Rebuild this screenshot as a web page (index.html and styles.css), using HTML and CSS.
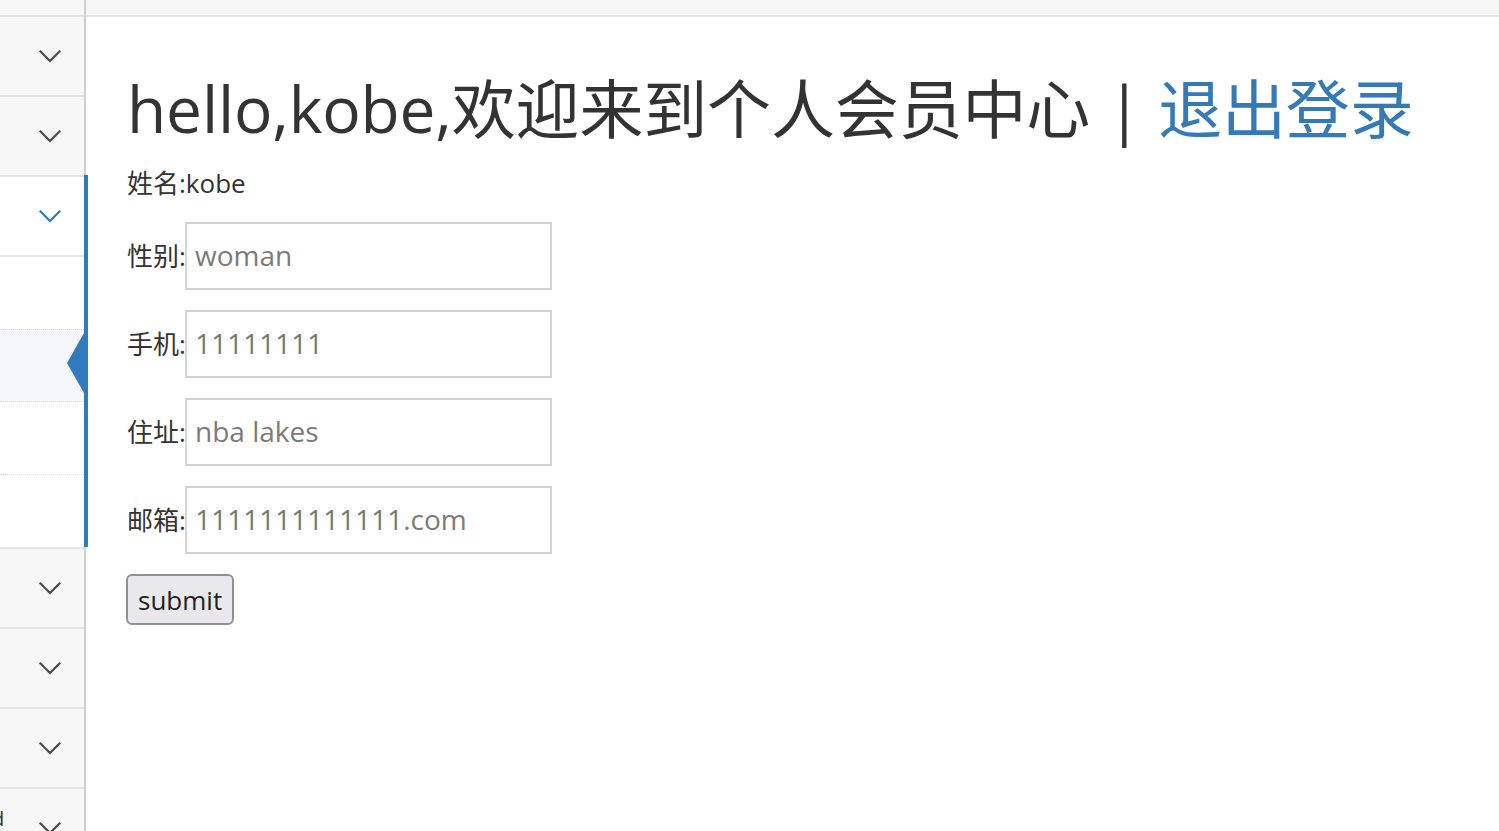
FILE: index.html
```html
<!DOCTYPE html>
<html lang="zh-CN">
<head>
<meta charset="utf-8">
<title>个人会员中心</title>
<link rel="stylesheet" href="styles.css">
</head>
<body>
<div class="layout">
  <aside class="sidebar">
    <div class="side-top"></div>
    <div class="menu-row"><svg class="chev" viewBox="0 0 22 13" width="22" height="13"><polyline points="1.5,1.5 11,11 20.5,1.5"/></svg></div>
    <div class="menu-row"><svg class="chev" viewBox="0 0 22 13" width="22" height="13"><polyline points="1.5,1.5 11,11 20.5,1.5"/></svg></div>
    <div class="menu-group">
      <div class="menu-row open-row"><svg class="chev blue" viewBox="0 0 22 13" width="22" height="13"><polyline points="1.5,1.5 11,11 20.5,1.5"/></svg></div>
      <ul class="submenu">
        <li></li>
        <li class="active"></li>
        <li></li>
        <li></li>
      </ul>
    </div>
    <div class="menu-row"><svg class="chev" viewBox="0 0 22 13" width="22" height="13"><polyline points="1.5,1.5 11,11 20.5,1.5"/></svg></div>
    <div class="menu-row"><svg class="chev" viewBox="0 0 22 13" width="22" height="13"><polyline points="1.5,1.5 11,11 20.5,1.5"/></svg></div>
    <div class="menu-row"><svg class="chev" viewBox="0 0 22 13" width="22" height="13"><polyline points="1.5,1.5 11,11 20.5,1.5"/></svg></div>
    <div class="menu-row last-row"><span class="cut-label">d</span><svg class="chev" viewBox="0 0 22 13" width="22" height="13"><polyline points="1.5,1.5 11,11 20.5,1.5"/></svg></div>
  </aside>
  <main class="main">
    <div class="topbar"></div>
    <div class="content">
      <h1 class="title">hello,kobe,欢迎来到个人会员中心 | <a class="logout" href="#">退出登录</a></h1>
      <p class="name">姓名:kobe</p>
      <form class="profile">
        <div class="field"><label class="lbl">性别:</label><input class="inp" type="text" placeholder="woman"></div>
        <div class="field"><label class="lbl">手机:</label><input class="inp" type="text" placeholder="11111111"></div>
        <div class="field"><label class="lbl">住址:</label><input class="inp" type="text" placeholder="nba lakes"></div>
        <div class="field"><label class="lbl">邮箱:</label><input class="inp" type="text" placeholder="1111111111111.com"></div>
        <div class="actions"><button class="submit" type="submit">submit</button></div>
      </form>
    </div>
  </main>
</div>
</body>
</html>
```
FILE: styles.css
```css
html, body {
  margin: 0;
  padding: 0;
  height: 100%;
  overflow: hidden;
  background: #fff;
  font-family: "Open Sans", "Noto Sans CJK SC", sans-serif;
  color: #333;
}

.layout {
  display: flex;
  height: 831px;
}

.sidebar {
  width: 84px;
  flex: 0 0 84px;
  border-right: 2px solid #cfcfcf;
  background: #f7f7f7;
  display: flex;
  flex-direction: column;
}

.side-top {
  height: 15px;
  flex: 0 0 15px;
  background: #f7f7f7;
}

.menu-row {
  height: 78px;
  flex: 0 0 78px;
  border-top: 2px solid #e4e4e4;
  background: #f7f7f7;
  display: flex;
  align-items: center;
  justify-content: flex-end;
  padding-right: 23px;
}

.open-row {
  background: #fff;
}

.chev {
  display: block;
  fill: none;
  stroke: #4a4a4a;
  stroke-width: 2.2;
  stroke-linecap: square;
}

.chev.blue {
  stroke: #2f7bbd;
}

.menu-group {
  position: relative;
  background: #fff;
}

.menu-group::after {
  content: "";
  position: absolute;
  top: 0;
  bottom: 0;
  right: -4px;
  width: 4px;
  background: #2f7bbd;
}

.submenu {
  list-style: none;
  margin: 0;
  padding: 0;
  border-top: 2px solid #e4e4e4;
}

.submenu li {
  height: 72px;
  background: #fff;
}

.submenu li + li {
  border-top: 1px dotted #d8d8d8;
}

.submenu li.active {
  background: #f4f6fb;
  position: relative;
  border-bottom: 1px dotted #d8d8d8;
  height: 71px;
}

.submenu li.active + li {
  border-top: none;
}

.submenu li.active::after {
  content: "";
  position: absolute;
  right: 0;
  top: 3px;
  width: 0;
  height: 0;
  border-top: 30px solid transparent;
  border-bottom: 30px solid transparent;
  border-right: 17px solid #2f7bbd;
}

.last-row {
  justify-content: space-between;
}

.cut-label {
  font-size: 20px;
  line-height: 24px;
  color: #333;
  margin-left: -8px;
  align-self: flex-end;
  margin-bottom: 36px;
}

.main {
  flex: 1;
  display: flex;
  flex-direction: column;
  background: #fff;
}

.topbar {
  height: 15px;
  flex: 0 0 15px;
  background: #f5f5f5;
  border-bottom: 2px solid #e4e4e4;
}

.content {
  padding-left: 41px;
  display: flex;
  flex-direction: column;
  align-items: flex-start;
}

.title {
  margin: 57px 0 0;
  font-size: 64px;
  line-height: 70px;
  font-weight: normal;
  letter-spacing: -0.15px;
  color: #333;
  white-space: nowrap;
}

.logout {
  color: #337ab7;
  text-decoration: none;
}

.name {
  margin: 24px 0 0;
  font-size: 26px;
  line-height: 30px;
  color: #333;
}

.profile {
  margin-top: 24px;
  display: flex;
  flex-direction: column;
  gap: 20px;
}

.field {
  display: flex;
  align-items: center;
}

.lbl {
  width: 58px;
  font-size: 26px;
  line-height: 30px;
  color: #333;
  white-space: nowrap;
}

.inp {
  box-sizing: border-box;
  width: 367px;
  height: 68px;
  margin: 0;
  border: 2px solid #d4d4d4;
  border-radius: 0;
  padding: 0 8px 2px;
  font-family: "Open Sans", sans-serif;
  font-size: 28px;
  color: #777;
  background: #fff;
  outline: none;
}

.inp::placeholder {
  color: #7b7b7b;
  opacity: 1;
}

.actions {
  display: flex;
}

.submit {
  box-sizing: border-box;
  height: 51px;
  width: 108px;
  margin: 0 0 0 -1px;
  padding: 0 10px;
  border: 2px solid #8f8f9d;
  border-radius: 6px;
  background: #e9e9ed;
  font-family: "Open Sans", sans-serif;
  font-size: 26px;
  color: #222;
}
```
